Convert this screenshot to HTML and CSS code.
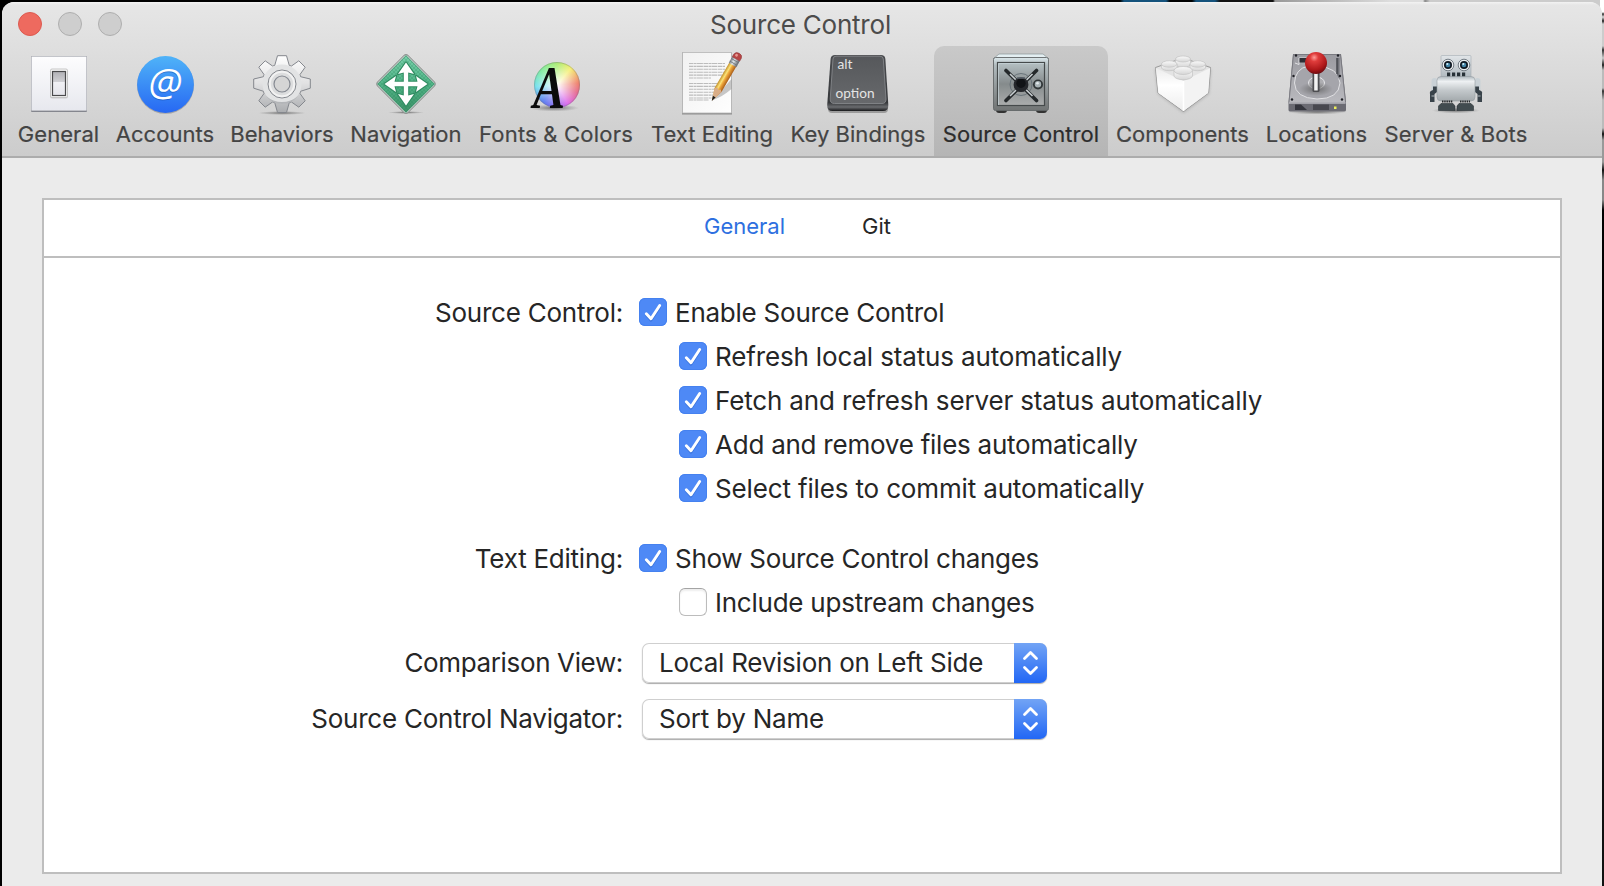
FILE: index.html
```html
<!DOCTYPE html>
<html lang="en">
<head>
<meta charset="utf-8">
<title>Source Control</title>
<link rel="stylesheet" href="styles.css">
</head>
<body>
<div class="window">
  <header class="toolbar">
    <div class="titlebar">
      <div class="lights"><span class="light close"></span><span class="light"></span><span class="light"></span></div>
      <h1 class="title">Source Control</h1>
    </div>
    <nav class="items">
      <div class="item w-general">
        <svg class="icon" viewBox="0 0 64 64">
          <defs>
            <linearGradient id="plate" x2="0" y2="1"><stop stop-color="#fdfdfe"/><stop offset="1" stop-color="#e7e8ee"/></linearGradient>
            <linearGradient id="rocker" x2="0" y2="1"><stop stop-color="#b0b0b5"/><stop offset=".42" stop-color="#cfcfd3"/><stop offset=".45" stop-color="#f0f0f4"/><stop offset="1" stop-color="#e4e4ea"/></linearGradient>
          </defs>
          <rect x="5" y="6" width="56" height="56" rx="1" fill="#84868e"/>
          <rect x="5.5" y="6.5" width="55" height="54" rx=".5" fill="url(#plate)" stroke="#c4c5cc" stroke-width=".7"/>
          <rect x="24" y="19.5" width="18" height="29" rx="2" fill="#aaa" opacity=".5"/>
          <rect x="24.5" y="19" width="17" height="28.5" rx="1.5" fill="#f7f7f7" stroke="#bbb" stroke-width=".8"/>
          <rect x="26.5" y="21.5" width="13" height="24" fill="url(#rocker)" stroke="#4a4a4c" stroke-width="1.2"/>
        </svg>
        <span class="label">General</span>
      </div>
      <div class="item w-accounts">
        <svg class="icon" viewBox="0 0 64 64">
          <defs><linearGradient id="at" x2="0" y2="1"><stop stop-color="#4fb3f8"/><stop offset="1" stop-color="#2768f3"/></linearGradient></defs>
          <circle cx="32.5" cy="35.3" r="28.5" fill="#777" opacity=".5"/>
          <circle cx="32.5" cy="34.5" r="28.4" fill="url(#at)"/>
          <g transform="translate(32.5 46) skewX(-8)">
            <text class="at-shadow" x="-1.5" y="1.3" text-anchor="middle">@</text>
            <text class="at" x="-1.5" y="0" text-anchor="middle">@</text>
          </g>
        </svg>
        <span class="label">Accounts</span>
      </div>
      <div class="item w-behaviors">
        <svg class="icon" viewBox="0 0 64 64">
          <defs>
            <linearGradient id="gear" gradientUnits="userSpaceOnUse" x1="0" y1="-29" x2="0" y2="29"><stop stop-color="#fff"/><stop offset=".48" stop-color="#e2e2e3"/><stop offset="1" stop-color="#a9abae"/></linearGradient>
            <radialGradient id="floor"><stop stop-color="#555" stop-opacity=".75"/><stop offset="1" stop-color="#666" stop-opacity="0"/></radialGradient>
          </defs>
          <ellipse cx="32" cy="63" rx="24" ry="2" fill="url(#floor)"/>
          <g transform="translate(32 34)" stroke="#84878d" stroke-width="1" stroke-linejoin="round" fill="url(#gear)">
            <path d="M-7.3-18.5-4.5-28.3H4.5L7.3-18.5 9.5-18 16.8-23.2 23.2-16.8 18-9.5 18.5-7.3 28.3-5V4.2L18.5 7.3 18 9.5 23.2 16.8 16.8 23.2 9.5 18 7.3 18.5 4.5 28.5H-4.5L-7.3 18.5-9.5 18-16.8 23.2-23.2 16.8-18 9.5-18.5 7.3-28.3 4.2V-5L-18.5-7.3-18-9.5-23.2-16.8-16.8-23.2-9.5-18Z"/>
            <circle r="19.5" stroke="none" fill="#e2e3e4"/>
            <circle r="14" fill="#dcddde"/>
            <circle r="12.2" fill="none" stroke="#f2f2f2" stroke-width="2"/>
            <circle r="8" fill="#d5d5d5" stroke="#858991" stroke-width="1.2"/>
            <path d="M-16 12A20 20 0 0 0 16 12 24 24 0 0 1-16 12Z" fill="#b3b5b8" stroke="none"/>
          </g>
        </svg>
        <span class="label">Behaviors</span>
      </div>
      <div class="item w-navigation">
        <svg class="icon" viewBox="0 0 64 64">
          <defs><linearGradient id="sign" x2="0" y2="1"><stop stop-color="#78cfaa"/><stop offset=".5" stop-color="#50b487"/><stop offset="1" stop-color="#3c9167"/></linearGradient>
          <pattern id="mesh" width="4" height="4" patternUnits="userSpaceOnUse"><path d="M0 2 2 0 4 2 2 4Z" fill="none" stroke="#267e55" stroke-width=".5"/></pattern></defs>
          <ellipse cx="32" cy="62.5" rx="18" ry="1.5" fill="url(#floor)"/>
          <rect x="-21.5" y="-21.5" width="43" height="43" rx="3" transform="translate(32 34) rotate(45)" fill="#fff" stroke="#8e9290" stroke-width="1"/>
          <path d="M32 5.5 60.5 34 32 62.5 3.5 34Z" fill="url(#sign)" stroke="#34835f" stroke-width=".8"/>
          <path d="M32 5.5 60.5 34 32 62.5 3.5 34Z" fill="url(#mesh)" opacity=".45"/>
          <path d="M32 12.5 40 24 34.2 22.5V31.8H43.5L42 26 53.5 34 42 42 43.5 36.2H34.2V45.5L40 44 32 55.5 24 44 29.8 45.5V36.2H20.5L22 42 10.5 34 22 26 20.5 31.8H29.8V22.5L24 24Z" fill="#fff" stroke="#2f8c61" stroke-width="2.2" paint-order="stroke" stroke-linejoin="round"/>
        </svg>
        <span class="label">Navigation</span>
      </div>
      <div class="item w-fonts">
        <svg class="icon" viewBox="0 0 64 64">
          <defs><radialGradient id="glow"><stop stop-color="#fff"/><stop offset=".25" stop-color="#fff" stop-opacity=".75"/><stop offset="1" stop-color="#fff" stop-opacity="0"/></radialGradient></defs>
          <ellipse cx="30" cy="58" rx="25" ry="3.5" fill="url(#floor)"/>
          <foreignObject x="10" y="12" width="46" height="46"><div class="wheel"></div></foreignObject>
          <circle cx="33" cy="35" r="22" fill="url(#glow)"/>
          <circle cx="33" cy="35" r="22.5" fill="none" stroke="#777" stroke-opacity=".4"/>
          <text class="big-a" x="9" y="58" textLength="32" lengthAdjust="spacingAndGlyphs">A</text>
        </svg>
        <span class="label">Fonts &amp; Colors</span>
      </div>
      <div class="item w-text">
        <svg class="icon" viewBox="0 0 64 64">
          <defs>
            <linearGradient id="sheet" x2="1" y2="1"><stop stop-color="#f1f1f1"/><stop offset="1" stop-color="#fefefe"/></linearGradient>
            <linearGradient id="wood" x2="1"><stop stop-color="#c49029"/><stop offset=".35" stop-color="#fbe37a"/><stop offset=".55" stop-color="#f0aa3e"/><stop offset="1" stop-color="#a95c18"/></linearGradient>
            <linearGradient id="ferrule" x2="1"><stop stop-color="#777d83"/><stop offset=".4" stop-color="#dfe5e9"/><stop offset="1" stop-color="#62676e"/></linearGradient>
          </defs>
          <rect x="2" y="3" width="50" height="61.5" fill="#8d8d8d"/>
          <rect x="2.5" y="2.5" width="49" height="60.5" fill="url(#sheet)" stroke="#b5b5b5" stroke-width=".8"/>
          <g stroke="#bcbcbc" stroke-width="1.1" stroke-dasharray="4.5 .5 2.5 .4 6 .6"><path d="M9 13.5H45M9 16.4H45M9 19.3H45M9 22.2H45M9 25.1H45M9 28H31M9 33.5H40M9 36.4H38M9 39.3H37M9 42.2H35M9 45.1H34M9 48H33M9 50H29"/></g>
          <path d="M33 50 51.5 29V39Q42 47 33 50Z" fill="#777" opacity=".4"/>
          <g transform="translate(32 50.5) rotate(30)">
            <path d="M0 0-4-12V-42H4V-12Z" fill="url(#wood)"/>
            <path d="M0 0-4-12-1.5-14 0-12 2-14 4-12Z" fill="#d9ad87"/>
            <path d="M0 .5-1.6-4.5H1.6Z" fill="#1d1d1d"/>
            <rect x="-4.3" y="-48" width="8.6" height="7" fill="url(#ferrule)"/>
            <path d="M-4.3-43H4.3M-4.3-46H4.3" stroke="#70777d" stroke-width=".8"/>
            <path d="M-4.3-48V-51Q-4-54.5 0-54.5T4.3-51V-48Z" fill="#b74645" stroke="#8a3236" stroke-width=".5"/>
            <circle cx="-1.4" cy="-51.5" r="1.4" fill="#e79a94"/>
          </g>
        </svg>
        <span class="label">Text Editing</span>
      </div>
      <div class="item w-keys">
        <svg class="icon" viewBox="0 0 64 64">
          <defs>
            <linearGradient id="keyside" x2="0" y2="1"><stop stop-color="#4b4d50"/><stop offset=".85" stop-color="#36383b"/><stop offset=".93" stop-color="#6a6c6f"/><stop offset="1" stop-color="#17181a"/></linearGradient>
            <linearGradient id="keytop" x2="0" y2="1"><stop stop-color="#56585b"/><stop offset="1" stop-color="#67696c"/></linearGradient>
          </defs>
          <rect x="2" y="55" width="60" height="8" rx="4" fill="#777" opacity=".6"/>
          <path d="M9 5H55Q59 5 59.4 9L62.3 55Q62.5 61 57 61H6.5Q1 61 1.2 55L4.6 9Q5 5 9 5Z" fill="url(#keyside)"/>
          <path d="M10 6.2H54Q57 6.2 57.3 9L60 49Q60 53.5 56 53.5H8.5Q4 53.5 4.2 49L7 9Q7.2 6.2 10 6.2Z" fill="url(#keytop)" stroke="#85878a" stroke-width=".9"/>
          <text class="key-text" x="11.5" y="19" textLength="15" lengthAdjust="spacingAndGlyphs">alt</text>
          <text class="key-text" x="9.5" y="48" textLength="39" lengthAdjust="spacingAndGlyphs">option</text>
        </svg>
        <span class="label">Key Bindings</span>
      </div>
      <div class="item w-source selected">
        <svg class="icon" viewBox="0 0 64 64">
          <defs>
            <linearGradient id="safe" x2="0" y2="1"><stop stop-color="#dce8ec"/><stop offset=".15" stop-color="#b1bbbe"/><stop offset="1" stop-color="#717474"/></linearGradient>
            <linearGradient id="door" x2="0" y2="1"><stop stop-color="#b6c1c4"/><stop offset=".5" stop-color="#858b8c"/><stop offset="1" stop-color="#abadad"/></linearGradient>
          </defs>
          <rect x="7" y="57" width="11" height="6" rx="3" fill="#333"/><rect x="47" y="57" width="11" height="6" rx="3" fill="#333"/>
          <path d="M10 4H54L60 9H4Z" fill="#e4eff2" stroke="#8b9699" stroke-width=".7"/>
          <rect x="4.5" y="7.5" width="55" height="53" rx="2" fill="url(#safe)" stroke="#626768" stroke-width=".9"/>
          <rect x="8.5" y="12.5" width="47" height="43" fill="url(#door)" stroke="#454a4b" stroke-width="1.2"/>
          <path d="M9.5 55V13.5H55" fill="none" stroke="#ccd8dc" stroke-width=".7"/>
          <circle cx="32" cy="34.5" r="11" fill="none" stroke="#636e75" stroke-width=".9"/>
          <path d="M17 20.5 47.5 50.5M47.5 20.5 17 50.5" stroke="#25292b" stroke-width="3.6" stroke-linecap="round"/>
          <path d="M21 24 43.5 46M43.5 24 21 46" stroke="#c8ced1" stroke-width="1.6"/>
          <circle cx="32" cy="34.7" r="7.4" fill="#25272b"/><circle cx="32" cy="33.2" r="4.7" fill="#111316"/><path d="M28 28H36" stroke="#596069" stroke-width="1.3"/>
          <circle cx="49" cy="34.5" r="5" fill="#303638"/><circle cx="49" cy="34.2" r="3.2" fill="#a7b1b4"/><circle cx="48.5" cy="33.2" r="1.3" fill="#e2e9ec"/>
        </svg>
        <span class="label">Source Control</span>
      </div>
      <div class="item w-components">
        <svg class="icon" viewBox="0 0 64 64">
          <defs>
            <linearGradient id="brick" x2="0" y2="1"><stop stop-color="#ececec"/><stop offset=".4" stop-color="#fff"/><stop offset="1" stop-color="#ededed"/></linearGradient>
            <linearGradient id="stud" x2="0" y2="1"><stop stop-color="#fafafa"/><stop offset="1" stop-color="#d6d6d6"/></linearGradient>
            <filter id="soft" x="-20%" y="-20%" width="140%" height="140%"><feGaussianBlur stdDeviation="1.8"/></filter>
          </defs>
          <path d="M5 19 33 9 61 19 59 44 33.5 63 8 44Z" fill="#888" opacity=".45" filter="url(#soft)"/>
          <path d="M5.5 17.5 33 8 60.5 17.5 58.5 43 33.5 61.5 8 43Z" fill="#e4e4e4" stroke="#929292" stroke-width=".9"/>
          <path d="M5.8 18 33.5 31V61L8.3 43Z" fill="url(#brick)"/><path d="M60.2 18 33.5 31V61L58.2 43Z" fill="#f3f3f3"/>
          <path d="M33.5 31V61" stroke="#fff" stroke-width="1.6"/>
          <g fill="url(#stud)" stroke="#bdbdbd" stroke-width=".6">
            <path d="M25.5 9V14A7.5 3.4 0 0 0 40.5 14V9Z"/><ellipse cx="33" cy="9" rx="7.5" ry="3"/>
            <path d="M11.5 14V18A8 3.6 0 0 0 27 18V14Z"/><ellipse cx="19.2" cy="14" rx="7.8" ry="3.2"/>
            <path d="M40 14V18A8 3.6 0 0 0 55.5 18V14Z"/><ellipse cx="47.7" cy="14" rx="7.8" ry="3.2"/>
            <path d="M24 20.5V26A9.3 4.2 0 0 0 42.5 26V20.5Z"/><ellipse cx="33.2" cy="20.5" rx="9.2" ry="4"/>
          </g>
        </svg>
        <span class="label">Components</span>
      </div>
      <div class="item w-locations">
        <svg class="icon" viewBox="0 0 64 64">
          <defs>
            <linearGradient id="disk" x2="0" y2="1"><stop stop-color="#9a9aa0"/><stop offset="1" stop-color="#b9b9be"/></linearGradient>
            <radialGradient id="ball" cx=".42" cy=".25" r=".75"><stop stop-color="#ff9d98"/><stop offset=".25" stop-color="#df3c3b"/><stop offset=".75" stop-color="#ad1719"/><stop offset="1" stop-color="#6e0c10"/></radialGradient>
          </defs>
          <ellipse cx="33" cy="62" rx="30" ry="2.5" fill="url(#floor)"/>
          <path d="M9 4H57L62 52V60Q62 61.5 60 61.5H6.5Q4.5 61.5 4.5 60V52Z" fill="#6b6b73"/>
          <path d="M9.5 4.5H56.5L61.5 52.5H5Z" fill="url(#disk)" stroke="#78787f" stroke-width=".8"/>
          <path d="M5 53H61.5" stroke="#dcdce1" stroke-width="1.2"/>
          <path d="M11 13 15 14.5V8H23V16H32Q55 17 56 33 55 49 33 49 11 48 10.5 33 11 19 24 16" fill="#a5a5ab" stroke="#e1e1e4" stroke-width="1"/>
          <path d="M52.5 8V24L55.5 30V8Z" fill="#6f7077"/><path d="M53 8V24" stroke="#33343a"/>
          <rect x="15.5" y="8" width="8" height="4.5" fill="#2d2e34"/>
          <ellipse cx="32.5" cy="33" rx="8" ry="6" fill="#aeaeb2" stroke="#e9e9ec"/>
          <ellipse cx="32" cy="39" rx="17" ry="7" fill="url(#floor)"/>
          <g fill="#202127"><circle cx="12" cy="5.5" r="1.2"/><circle cx="54" cy="5.5" r="1.2"/><circle cx="9.5" cy="26" r="1.2"/><circle cx="56" cy="26" r="1.2"/><circle cx="8" cy="49.5" r="1.2"/><circle cx="58" cy="49.5" r="1.2"/></g>
          <path d="M30 54.5V60M32 54.5V60M34 54.5V60M36 54.5V60M38 54.5V60M40 54.5V60M42 54.5V60M44 54.5V60" stroke="#26272c" stroke-width="1"/>
          <path d="M11 54.5H17L23 60H11Z" fill="#34353d"/><rect x="50" y="56.5" width="2.500" height="2.500" fill="#eef05a"/>
          <rect x="28.500" y="22" width="7" height="20" rx="1.500" fill="#4d4d50"/><rect x="30.200" y="22" width="3.500" height="18.500" fill="#f2f2f2"/>
          <circle cx="32" cy="13" r="11" fill="url(#ball)"/>
        </svg>
        <span class="label">Locations</span>
      </div>
      <div class="item w-server">
        <svg class="icon" viewBox="0 0 64 64">
          <defs>
            <linearGradient id="head" x2="0" y2="1"><stop stop-color="#e1e5e8"/><stop offset="1" stop-color="#adb7bd"/></linearGradient>
            <linearGradient id="body" x2="0" y2="1"><stop stop-color="#b1babf"/><stop offset=".2" stop-color="#eef1f3"/><stop offset=".55" stop-color="#c4c9cc"/><stop offset="1" stop-color="#a3a9ac"/></linearGradient>
          </defs>
          <ellipse cx="32" cy="60.5" rx="24" ry="3" fill="url(#floor)"/>
          <rect x="17" y="5.5" width="30" height="23" rx="1" fill="url(#head)" stroke="#a4adb3" stroke-width=".6"/>
          <g fill="#273137"><rect x="23" y="22.5" width="3.2" height="6"/><rect x="28" y="22.5" width="3.2" height="6"/><rect x="33" y="22.5" width="3.2" height="6"/><rect x="38" y="22.5" width="3.2" height="6"/></g>
          <g><circle cx="24" cy="15" r="5.8" fill="#eceff1" stroke="#737c84" stroke-width="1"/><circle cx="24" cy="15" r="4" fill="#101922"/><circle cx="24" cy="15" r="2.3" fill="#4386a8"/><circle cx="23.3" cy="14" r="1" fill="#d5ecf5"/></g>
          <g><circle cx="40" cy="15" r="5.8" fill="#eceff1" stroke="#737c84" stroke-width="1"/><circle cx="40" cy="15" r="4" fill="#101922"/><circle cx="40" cy="15" r="2.3" fill="#4386a8"/><circle cx="39.3" cy="14" r="1" fill="#d5ecf5"/></g>
          <rect x="7.5" y="28" width="6" height="14" rx="3" fill="#c9d1d6"/><rect x="50.5" y="28" width="6" height="14" rx="3" fill="#c9d1d6"/>
          <path d="M9 36.5H13V42L10.5 44V52H6V44Q5 41 9 40ZM55 36.5H51V42L53.5 44V52H58V44Q59 41 55 40Z" fill="#39434a"/>
          <path d="M10.8 46H7.5M53.5 46H56.5" stroke="#afb7bc" stroke-width="1.2"/>
          <rect x="13" y="26.5" width="38" height="24.5" rx="4" fill="url(#body)" stroke="#959da2" stroke-width=".6"/>
          <path d="M18 51.5H29M36 51.5H46" stroke="#26292b" stroke-width="2.2" stroke-dasharray="1.5 .7"/>
          <path d="M17 53.5H29L31 56V60.5H14.5V56ZM35 53.5H47L49.5 56V60.5H33V56Z" fill="#414b4f" stroke="#293136" stroke-width=".6"/>
        </svg>
        <span class="label">Server &amp; Bots</span>
      </div>
    </nav>
  </header>

  <main class="panel">
    <div class="tabs"><span class="tab active">General</span><span class="tab">Git</span></div>
    <div class="form">
      <div class="row">
        <span class="caption">Source Control:</span>
        <span class="check"><svg class="box" viewBox="0 0 28 28"><use href="#tick"/></svg><span>Enable Source Control</span></span>
      </div>
      <div class="row sub loose"><span class="check"><svg class="box" viewBox="0 0 28 28"><use href="#tick"/></svg><span>Refresh local status automatically</span></span></div>
      <div class="row sub loose"><span class="check"><svg class="box" viewBox="0 0 28 28"><use href="#tick"/></svg><span>Fetch and refresh server status automatically</span></span></div>
      <div class="row sub"><span class="check"><svg class="box" viewBox="0 0 28 28"><use href="#tick"/></svg><span>Add and remove files automatically</span></span></div>
      <div class="row sub loose"><span class="check"><svg class="box" viewBox="0 0 28 28"><use href="#tick"/></svg><span>Select files to commit automatically</span></span></div>
      <div class="row group">
        <span class="caption">Text Editing:</span>
        <span class="check tight"><svg class="box" viewBox="0 0 28 28"><use href="#tick"/></svg><span>Show Source Control changes</span></span>
      </div>
      <div class="row sub"><span class="check"><span class="box empty"></span><span>Include upstream changes</span></span></div>
      <div class="row select-row first">
        <span class="caption tighter">Comparison View:</span>
        <span class="select"><span class="value">Local Revision on Left Side</span><svg class="stepper" viewBox="0 0 33 40"><use href="#arrows"/></svg></span>
      </div>
      <div class="row select-row">
        <span class="caption">Source Control Navigator:</span>
        <span class="select"><span class="value">Sort by Name</span><svg class="stepper" viewBox="0 0 33 40"><use href="#arrows"/></svg></span>
      </div>
    </div>
  </main>
</div>
<svg class="symbols" width="0" height="0">
  <symbol id="tick" viewBox="0 0 28 28"><path d="M7.3 16.2 12 21.500 20.700 8.200" transform="translate(0 .8)" fill="none" stroke="#2760c4" stroke-opacity=".45" stroke-width="2.800" stroke-linecap="round" stroke-linejoin="round"/><path d="M7.300 15.700 12 20.800 20.700 7.500" fill="none" stroke="#fff" stroke-width="2.900" stroke-linecap="round" stroke-linejoin="round"/></symbol>
  <symbol id="arrows" viewBox="0 0 33 40"><path d="M10.500 15.500 16.500 9.500 22.500 15.500M10.500 24.500 16.500 30.500 22.500 24.500" fill="none" stroke="#fff" stroke-width="2.800" stroke-linecap="round" stroke-linejoin="round"/></symbol>
</svg>
</body>
</html>
```

FILE: styles.css
```css
* { box-sizing: border-box; }

body {
  margin: 0;
  width: 1604px;
  height: 886px;
  overflow: hidden;
  padding: 2px 2px 0;
  color: #262626;
  font-family: Inter, "Liberation Sans", sans-serif;
  background:
    linear-gradient(#fff 0 12px, #333 14px, #ddd 17px, #222 21px, #ccc 24px 46px, #333 50px, #ccc 58px, #222 65px, #bbb 70px 88px, #333 91px, #bbb 100px 128px, #111 134px, #999 140px 162px, #111 170px, #888 180px 200px, #000 210px, #111 100%) right / 4px 100% no-repeat,
    linear-gradient(90deg, #000 1120px, #14527c 1124px 1166px, #000 1170px 1192px, #14527c 1196px 1215px, #111 1220px 1273px, #999 1275px, #ddd 1390px 1423px, #888 1425px, #ccc 1430px) top / 100% 16px no-repeat,
    #000;
}

.window {
  height: 884px;
  border-radius: 12px 12px 0 0;
  background: #ebebeb;
  overflow: hidden;
}

.toolbar {
  height: 156px;
  border-bottom: 2px solid #acacac;
  background: linear-gradient(#f3f3f3 0, #e6e6e6 3px, #cccccc 100%);
}

.titlebar {
  display: grid;
  grid-template-columns: 200px 1fr 200px;
  height: 44px;
  align-items: center;
}

.lights { display: flex; gap: 16px; padding-left: 16px; }
.light { width: 24px; height: 24px; border-radius: 50%; border: 1px solid #aeaeae; background: #cecece; }
.close { border-color: #dc5a50; background: #ee6a5f; }

.title {
  margin: 2px 3px 0 0;
  font-size: 26px;
  line-height: 32px;
  font-weight: 400;
  letter-spacing: -.22px;
  text-align: center;
  color: #4c4c4c;
}

.items { display: flex; height: 110px; padding-left: 6px; }
.item {
  display: flex;
  flex-direction: column;
  align-items: center;
  padding-top: 4px;
  gap: 7px;
  border-radius: 10px 10px 0 0;
  color: #444;
}
.icon { width: 64px; height: 64px; overflow: visible; flex: none; }
.label { font-size: 22px; line-height: 26px; white-space: nowrap; letter-spacing: .04px; -webkit-text-stroke: .2px; }
.selected { background: linear-gradient(#c9c9c9, #b5b5b5); color: #2c2c2c; }

.w-general { width: 100px; }
.w-general .label { padding-left: 1px; }
.w-accounts { width: 114px; }
.w-behaviors { width: 120px; }
.w-navigation { width: 128px; }
.w-fonts { width: 172px; }
.w-fonts .label { letter-spacing: .2px; }
.w-text { width: 140px; }
.w-keys { width: 152px; }
.w-source { width: 174px; }
.w-components { width: 148px; }
.w-components .label { padding-left: 1px; }
.w-locations { width: 120px; }
.w-locations .label { padding-left: 1px; }
.w-server { width: 160px; }
.w-server .label { letter-spacing: .12px; }

.at, .at-shadow { font: 38px "Open Sans", sans-serif; fill: #fff; }
.at-shadow { fill: #174aa5; opacity: .5; }
.big-a { font: italic bold 62px "Liberation Serif", serif; fill: #0b0b0b; }
.key-text { font: 13.5px Lato, sans-serif; fill: #e4e4e4; }
.wheel {
  width: 46px;
  height: 46px;
  border-radius: 50%;
  background: conic-gradient(from 0deg, #a9ec72, #f5ef73 40deg, #ee7f6a 85deg, #e56a8d 110deg, #dd6bea 150deg, #7f6af0 190deg, #5b7df0 220deg, #73e0ee 265deg, #7eeba2 310deg, #a9ec72);
}

.panel {
  height: 676px;
  margin: 40px;
  border: 2px solid #bebebe;
  background: #fff;
}

.tabs {
  display: flex;
  gap: 77px;
  height: 58px;
  padding: 13px 0 0 660px;
  border-bottom: 2px solid #bebebe;
  font-size: 22px;
  line-height: 26px;
}
.active { color: #2d6fe0; }

.form { padding-top: 32px; font-size: 26px; line-height: 32px; letter-spacing: -.24px; }
.row {
  display: grid;
  grid-template-columns: 579px 1fr;
  column-gap: 16px;
  align-items: center;
  height: 44px;
  white-space: nowrap;
}
.sub { padding-left: 635px; display: flex; }
.loose { letter-spacing: -.15px; }
.tight { letter-spacing: -.3px; }
.tighter { letter-spacing: -.36px; }
.group { margin-top: 26px; }
.caption { text-align: right; padding-top: 2px; }
.check { display: flex; align-items: center; gap: 8px; }
.check > span:last-child { padding-top: 2px; }
.box { width: 28px; height: 28px; border-radius: 6px; background: #4e89f6; flex: none; box-shadow: inset 0 0 0 1px #4581ef; }
.empty {
  background: #fff;
  border: 1px solid #bcbcbc;
  border-top-color: #a4a4a4;
  box-shadow: inset 0 2px 2px #eee;
}

.select-row { height: 40px; margin-top: 16px; column-gap: 19px; }
.select-row .caption { padding: 0 0 1px; }
.first { margin-top: 19px; }
.select {
  display: flex;
  justify-content: space-between;
  width: 405px;
  height: 40px;
  border-radius: 7px;
  box-shadow: inset 0 0 0 1px #cfcfcf, 0 1px 1px #aaa;
  overflow: hidden;
}
.value { padding: 4px 0 0 17px; }
.stepper { width: 33px; height: 40px; background: linear-gradient(#72a4f5, #2267f5); }
.symbols { display: block; }
```
